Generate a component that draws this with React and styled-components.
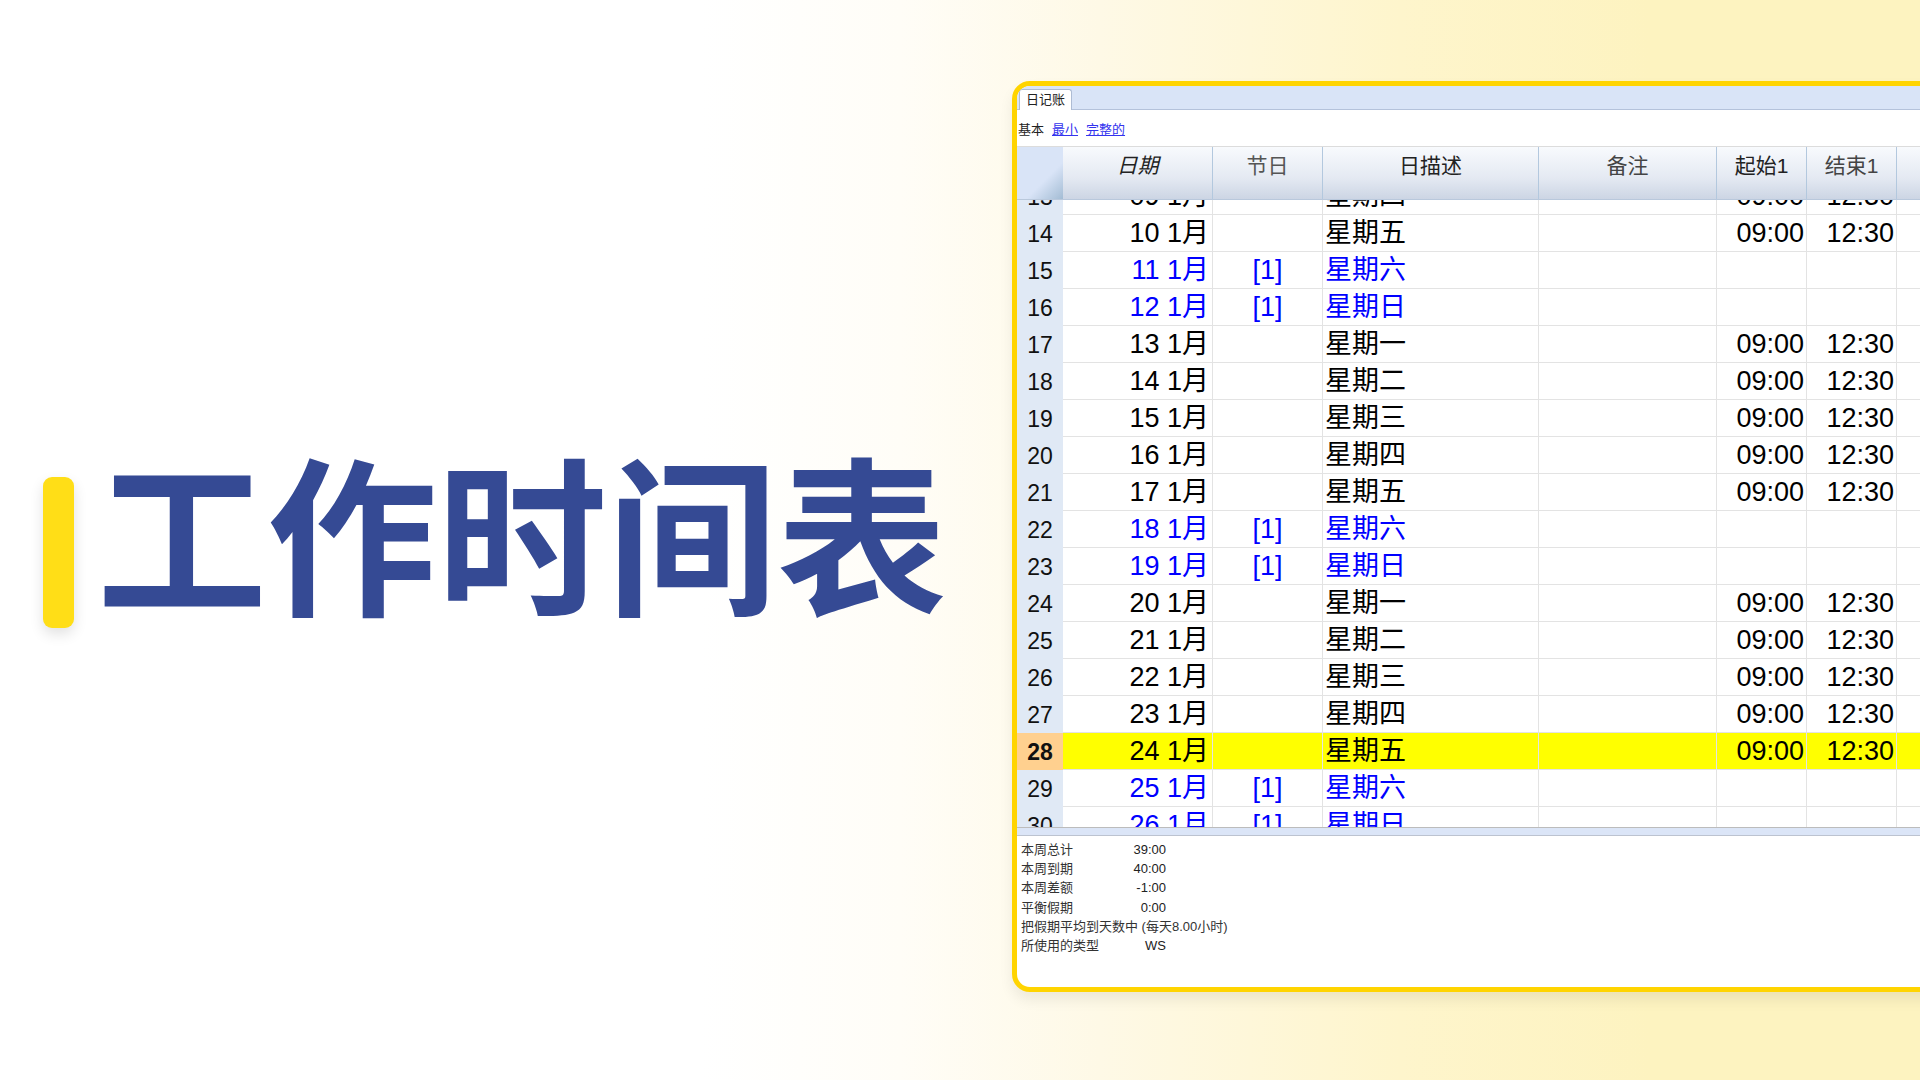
import styled, { createGlobalStyle } from "styled-components";

const GlobalStyle = createGlobalStyle`
  html, body {
    margin: 0;
    padding: 0;
    background: #fff;
  }
`;

const CJK = `"Liberation Sans", "Noto Sans CJK SC", sans-serif`;
const COLS = "46px 150px 110px 216px 178px 90px 90px 110px";

const Page = styled.div`
  width: 1920px;
  height: 1080px;
  display: flex;
  overflow: hidden;
  background: linear-gradient(90deg, #fff 700px, #fffdf7 900px, #fef9e6 1100px, #fef5cc 1400px, #fdf3c0 1650px);
  font-family: ${CJK};
`;

const Hero = styled.div`
  width: 1012px;
  flex-shrink: 0;
  box-sizing: border-box;
  padding: 477px 0 0 43px;
  display: flex;
  align-items: flex-start;
  gap: 23px;
`;

const Bar = styled.div`
  width: 31px;
  height: 151px;
  border-radius: 9px;
  background: #ffde17;
  box-shadow: 0 6px 14px rgba(0, 0, 0, 0.12);
`;

const Title = styled.h1`
  margin: -48px 0 0;
  font-family: "Noto Sans CJK SC", sans-serif;
  font-size: 170px;
  line-height: 200px;
  font-weight: 700;
  color: #354a94;
  white-space: nowrap;
`;

const Win = styled.div`
  margin-top: 81px;
  width: 1000px;
  height: 911px;
  flex-shrink: 0;
  box-sizing: border-box;
  border: 5px solid #ffd400;
  border-radius: 18px 0 0 18px;
  background: #fff;
  overflow: hidden;
  display: flex;
  flex-direction: column;
  box-shadow: 0 8px 14px rgba(0, 0, 0, 0.07);
`;

const TabStrip = styled.div`
  height: 24px;
  flex-shrink: 0;
  box-sizing: border-box;
  background: #d9e4f7;
  border-bottom: 1px solid #b4c2db;
  padding: 3px 0 0 2px;
  display: flex;
`;

const Tab = styled.div`
  width: 53px;
  height: 21px;
  box-sizing: border-box;
  background: #fff;
  border: 1px solid #aebcd4;
  border-bottom: 0;
  border-radius: 3px 3px 0 0;
  font-size: 13px;
  line-height: 20px;
  text-align: center;
  color: #222;
`;

const ViewBar = styled.div`
  height: 37px;
  flex-shrink: 0;
  box-sizing: border-box;
  border-bottom: 1px solid #dcdcdc;
  padding: 12px 0 0 1px;
  display: flex;
  gap: 8px;
  font-size: 13px;
  line-height: 16px;
  color: #222;
`;

const ViewLink = styled.a`
  color: #3333ee;
  text-decoration: underline;
`;

const Head = styled.div`
  height: 53px;
  flex-shrink: 0;
  position: relative;
  z-index: 1;
  display: grid;
  grid-template-columns: ${COLS};
  background: linear-gradient(180deg, #f8fafd 0%, #e4e9f2 60%, #ccd5e4 100%);
  border-bottom: 1px solid #b9c8dc;
  box-sizing: border-box;
`;

const Corner = styled.div`
  background: linear-gradient(135deg, #d9e4f7 62%, #a3bcd4 100%);
`;

const HeadCell = styled.div`
  box-sizing: border-box;
  border-right: 1px solid #b3c8de;
  text-align: center;
  font-size: 21px;
  line-height: 31px;
  padding-top: 3px;
  font-style: ${(p) => (p.$italic ? "italic" : "normal")};
  color: ${(p) => p.$color || "#222"};
  white-space: nowrap;
`;

const Grid = styled.div`
  height: 627px;
  flex-shrink: 0;
  overflow: hidden;
`;

const Rows = styled.div`
  margin-top: -22px;
`;

const Row = styled.div`
  height: 37px;
  box-sizing: border-box;
  display: grid;
  grid-template-columns: ${COLS};
  border-bottom: 1px solid #e3e3e3;
  background: ${(p) => (p.$current ? "#ffff00" : "#fff")};
  color: ${(p) => (p.$holiday ? "#0000ff" : "#000")};
  font-size: 27px;
  line-height: 36px;
`;

const RowNum = styled.div`
  background: ${(p) => (p.$current ? "#ffd08f" : "#e0e9f5")};
  color: #111;
  font-size: 23px;
  line-height: 38px;
  text-align: center;
  font-weight: ${(p) => (p.$current ? 700 : 400)};
`;

const Cell = styled.div`
  box-sizing: border-box;
  border-right: 1px solid #e3e3e3;
  white-space: nowrap;
  overflow: hidden;
  text-align: ${(p) => p.$align || "left"};
  padding: ${(p) => p.$pad || "0"};
`;

const Splitter = styled.div`
  height: 9px;
  flex-shrink: 0;
  box-sizing: border-box;
  background: #dbe5f7;
  border-top: 1px solid #bcbcbc;
  border-bottom: 1px solid #bcc3d0;
`;

const Summary = styled.div`
  padding: 4px 0 0 4px;
  font-size: 13px;
  line-height: 19.2px;
  color: #333;
`;

const SumRow = styled.div`
  display: flex;
  white-space: nowrap;
`;

const SumLabel = styled.span`
  width: 105px;
`;

const SumValue = styled.span`
  width: 40px;
  text-align: right;
  color: #222;
`;

const summary = [
  ["本周总计", "39:00"],
  ["本周到期", "40:00"],
  ["本周差额", "-1:00"],
  ["平衡假期", "0:00"],
];

const days = ["星期四", "星期五", "星期六", "星期日", "星期一", "星期二", "星期三"];

const rows = Array.from({ length: 18 }, (_, i) => {
  const date = 9 + i;
  const day = days[i % 7];
  return {
    num: 13 + i,
    date: String(date).padStart(2, "0"),
    day,
    holiday: day === "星期六" || day === "星期日",
    current: date === 24,
  };
});

const App = () => (
  <Page>
    <GlobalStyle />
    <Hero>
      <Bar />
      <Title>工作时间表</Title>
    </Hero>
    <Win>
      <TabStrip>
        <Tab>日记账</Tab>
      </TabStrip>
      <ViewBar>
        <span>基本</span>
        <ViewLink>最小</ViewLink>
        <ViewLink>完整的</ViewLink>
      </ViewBar>
      <Head>
        <Corner />
        <HeadCell $italic>日期</HeadCell>
        <HeadCell $color="#555">节日</HeadCell>
        <HeadCell>日描述</HeadCell>
        <HeadCell $color="#444">备注</HeadCell>
        <HeadCell>起始1</HeadCell>
        <HeadCell $color="#444">结束1</HeadCell>
        <HeadCell>起</HeadCell>
      </Head>
      <Grid>
        <Rows>
          {rows.map((r) => (
            <Row key={r.num} $holiday={r.holiday} $current={r.current}>
              <RowNum $current={r.current}>{r.num}</RowNum>
              <Cell $align="right" $pad="0 3px 0 0">{r.date} 1月</Cell>
              <Cell $align="center">{r.holiday ? "[1]" : ""}</Cell>
              <Cell $pad="0 0 0 2px">{r.day}</Cell>
              <Cell />
              <Cell $align="right" $pad="0 2px 0 0">{r.holiday ? "" : "09:00"}</Cell>
              <Cell $align="right" $pad="0 2px 0 0">{r.holiday ? "" : "12:30"}</Cell>
              <Cell />
            </Row>
          ))}
        </Rows>
      </Grid>
      <Splitter />
      <Summary>
        {summary.map(([label, value]) => (
          <SumRow key={label}>
            <SumLabel>{label}</SumLabel>
            <SumValue>{value}</SumValue>
          </SumRow>
        ))}
        <SumRow>把假期平均到天数中 (每天8.00小时)</SumRow>
        <SumRow>
          <SumLabel>所使用的类型</SumLabel>
          <SumValue>WS</SumValue>
        </SumRow>
      </Summary>
    </Win>
  </Page>
);

export default App;
